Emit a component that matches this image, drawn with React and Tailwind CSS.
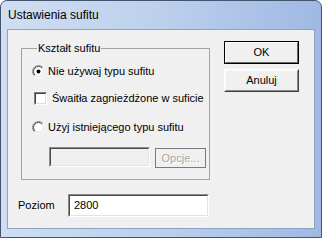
import React from "react";

function Radio({ checked }) {
  return (
    <svg width="13" height="13" viewBox="0 0 13 13" className="shrink-0">
      <defs>
        <linearGradient id={checked ? "ro1" : "ro2"} x1="0" y1="0" x2="1" y2="1">
          <stop offset="0.45" stopColor="#8a8a8a" />
          <stop offset="0.55" stopColor="#ffffff" />
        </linearGradient>
        <linearGradient id={checked ? "ri1" : "ri2"} x1="0" y1="0" x2="1" y2="1">
          <stop offset="0.45" stopColor="#4a4a4a" />
          <stop offset="0.55" stopColor="#dcdcdc" />
        </linearGradient>
      </defs>
      <circle cx="6.5" cy="6.5" r="6" fill="none" stroke={`url(#${checked ? "ro1" : "ro2"})`} strokeWidth="1" />
      <circle cx="6.5" cy="6.5" r="5" fill="#ffffff" stroke={`url(#${checked ? "ri1" : "ri2"})`} strokeWidth="1" />
      {checked && <circle cx="6.5" cy="6.5" r="2" fill="#000000" />}
    </svg>
  );
}

function Checkbox() {
  return (
    <div className="w-[13px] h-[13px] shrink-0 border border-t-[#808080] border-l-[#808080] border-b-white border-r-white">
      <div className="w-full h-full bg-white border border-t-[#404040] border-l-[#404040] border-b-[#dcdcdc] border-r-[#dcdcdc]" />
    </div>
  );
}

function Sunken({ className, inner, children }) {
  return (
    <div className={`border border-t-[#8c8c8c] border-l-[#8c8c8c] border-b-white border-r-white ${className}`}>
      <div className={`w-full h-full border border-t-[#4a4a4a] border-l-[#4a4a4a] border-b-[#e3e3e3] border-r-[#e3e3e3] ${inner}`}>
        {children}
      </div>
    </div>
  );
}

export default function App() {
  return (
    <div
      className="w-[322px] h-[238px] flex flex-col border border-[#44546e] rounded-t-[7px] bg-gradient-to-r from-[#cfdef2] via-[#bcd0ec] to-[#9fb9e4] overflow-hidden"
      style={{ fontFamily: '"Liberation Sans", Arial, sans-serif' }}
    >
      <div className="h-[28px] shrink-0 flex items-center pl-[7px] text-[12px] text-black">
        Ustawienia sufitu
      </div>
      <div className="mx-[6px] h-[200px] shrink-0 border border-[#8ea3c4] bg-[#f0f0f0] flex text-[11px] leading-[13px] text-black">
        <div className="w-[208px] flex flex-col pl-[10px]">
          <fieldset className="mt-[12px] ml-[3px] w-[189px] border border-[#a3a3a3] pl-[10px] pb-[11px]">
            <legend className="ml-[5px] px-[1px] leading-[13px]">Kształt sufitu</legend>
            <div className="mt-[10px] flex items-center h-[13px]">
              <Radio checked />
              <span className="ml-[3px]">Nie używaj typu sufitu</span>
            </div>
            <div className="mt-[14px] flex items-center h-[13px] ml-[2px]">
              <Checkbox />
              <span className="ml-[5px]">Śwaitła zagnieżdżone w suficie</span>
            </div>
            <div className="mt-[16px] flex items-center h-[13px]">
              <Radio />
              <span className="ml-[3px]">Użyj istniejącego typu sufitu</span>
            </div>
            <div className="mt-[13px] flex ml-[17px]">
              <Sunken className="w-[101px] h-[20px]" inner="bg-[#f0f0f0]" />
              <div className="ml-[5px] mt-[1px] w-[51px] h-[20px] border border-[#7a7a7a] bg-[#f0f0f0] flex items-center justify-center text-[#a6a6a6] [text-shadow:1px_1px_0_#ffffff]">
                Opcje...
              </div>
            </div>
          </fieldset>
          <div className="mt-[14px] flex items-center">
            <span className="w-[50px]">Poziom</span>
            <Sunken className="w-[141px] h-[23px]" inner="bg-white flex items-center pl-[4px]">
              2800
            </Sunken>
          </div>
        </div>
        <div className="ml-[8px] pt-[11px] flex flex-col gap-[5px]">
          <div className="w-[75px] h-[23px] border border-black">
            <div className="w-full h-full border border-t-white border-l-white border-b-[#6a6a6a] border-r-[#6a6a6a] flex items-center justify-center">
              OK
            </div>
          </div>
          <div className="w-[75px] h-[23px] border border-t-white border-l-white border-b-[#404040] border-r-[#404040]">
            <div className="w-full h-full border border-t-[#f8f8f8] border-l-[#f8f8f8] border-b-[#8a8a8a] border-r-[#8a8a8a] flex items-center justify-center">
              Anuluj
            </div>
          </div>
        </div>
      </div>
    </div>
  );
}
